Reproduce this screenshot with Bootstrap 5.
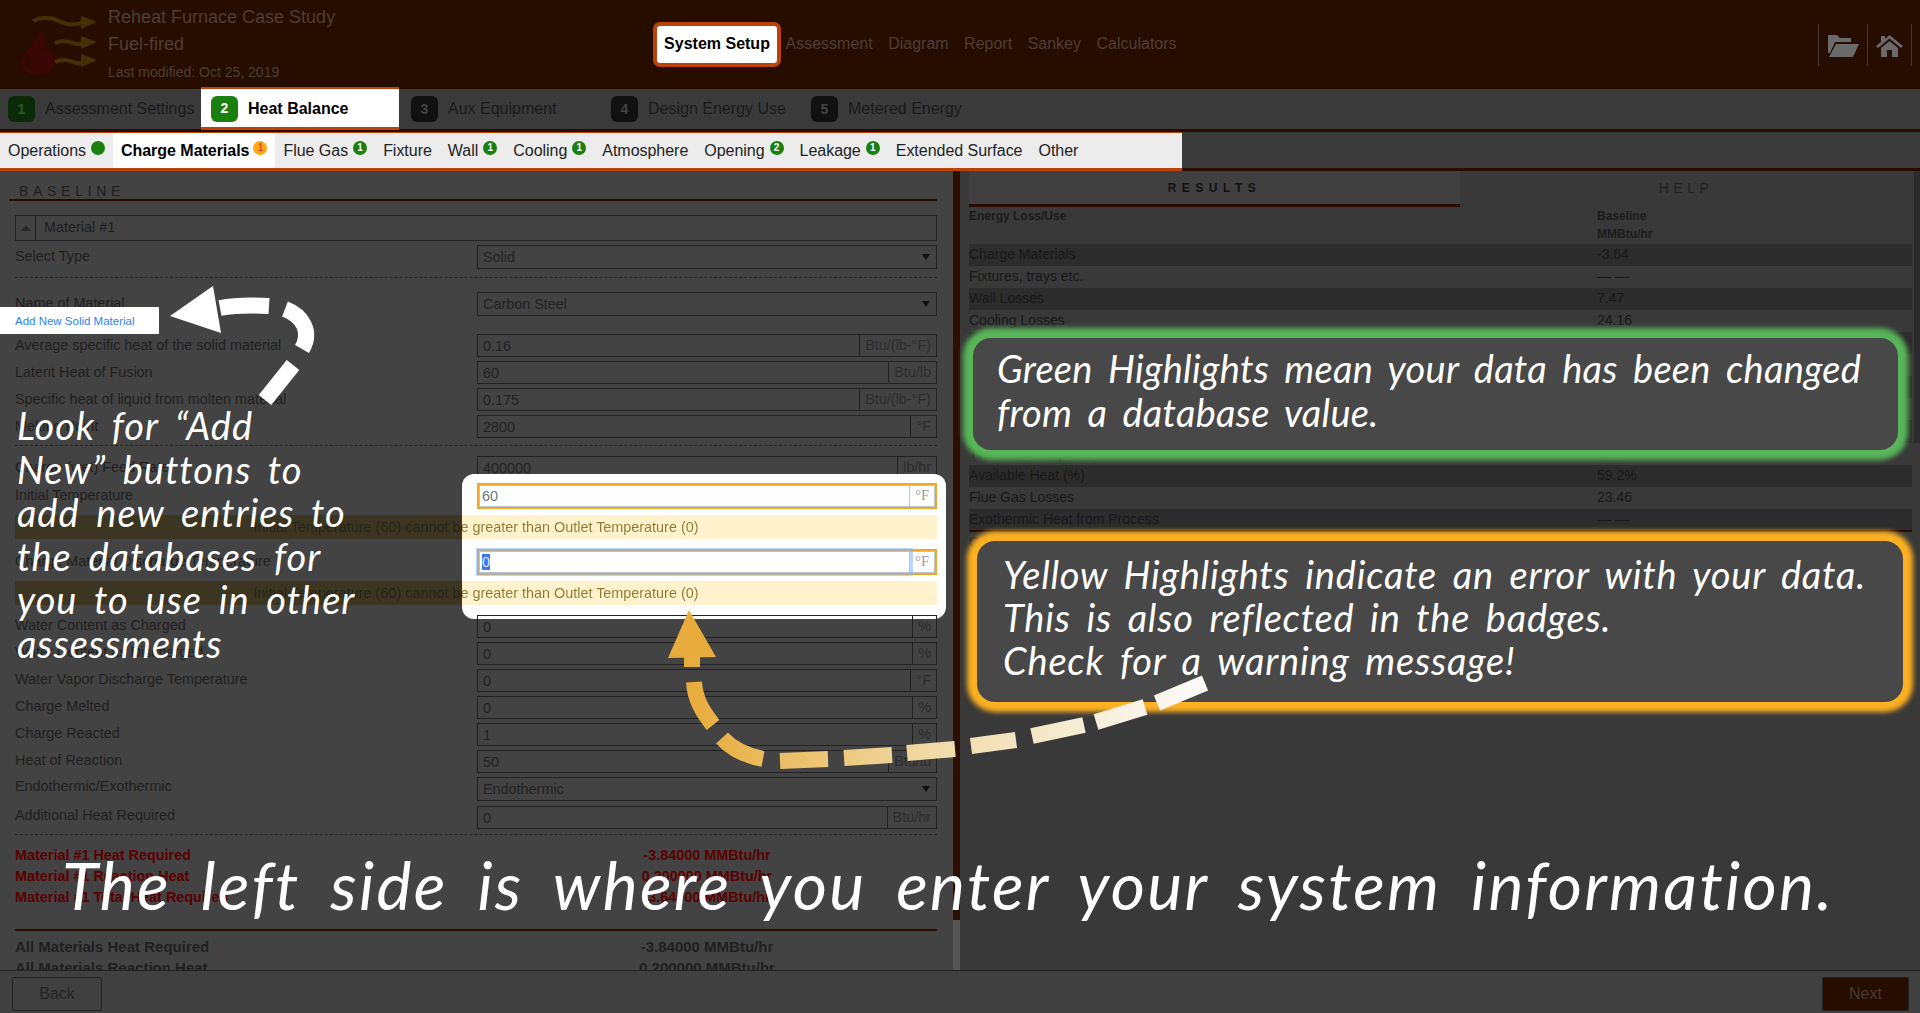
<!DOCTYPE html>
<html lang="en">
<head>
    <meta charset="UTF-8">
    <title>Reheat Furnace Case Study - System Setup</title>
    <link href="https://cdn.jsdelivr.net/npm/bootstrap@5.3.0/dist/css/bootstrap.min.css" rel="stylesheet">
    <style>
        html, body { height: 100%; margin: 0; overflow: hidden; }
        body { font-family: "Liberation Sans", Arial, sans-serif; font-size: 14.4px; color: #202020; background: #393939; }
        .shot { position: relative; width: 1920px; height: 1013px; overflow: hidden; display: flex; flex-direction: column; }

        .topbar { height: 89px; background: #270c00; color: #4e3e36; flex: none; }
        .logo-box { width: 108px; padding: 15px 0 0 19px; }
        .title-box { width: 545px; padding-top: 4px; }
        .title-box div { font-size: 18px; line-height: 27px; }
        .title-box .stamp { font-size: 14px; line-height: 28px; }
        .top-nav { gap: 15.5px; font-size: 16px; padding-bottom: 2px; }
        .setup-btn { background: #fff; border: 4px solid #bb4307; border-radius: 7px; color: #000; font-weight: bold; height: 45px; width: 128px; margin: 2px -11px 0 0; padding: 0 0 2px; }
        .tool-cell { width: 49px; height: 42px; border-left: 1px solid #4a3a33; }
        .tool-cell:last-child { width: 45px; border-right: 1px solid #4a3a33; }

        .step-bar { height: 43px; background: #3a3a3a; border-bottom: 3px solid #2a0d00; flex: none; font-size: 16px; color: #1a1a1a; }
        .step { height: 40px; padding-left: 12px; gap: 10px; width: 200px; }
        .step.first { width: 201px; padding-left: 8px; }
        .step.on { width: 198px; padding: 1px 0 0 10px; height: 43px; margin-top: -2px; background: #fff; color: #000; font-weight: bold; border-top: 2px solid #bb4307; border-bottom: 3px solid #bb4307; }
        .step-num { width: 27px; height: 26px; border-radius: 6px; background: #111; color: #444; font-size: 14px; font-weight: bold; display: flex; align-items: center; justify-content: center; }
        .step.first .step-num { background: #0a2a08; color: #2c5a28; }
        .step.on .step-num { background: #198010; color: #fff; }

        .sub-bar { height: 39px; flex: none; background: #3a3a3a; border-bottom: 3px solid #2a0d00; }
        .sub-strip { width: 1182px; height: 39px; background: #ececec; border-top: 1px solid #bb4307; border-bottom: 3px solid #bb4307; font-size: 16px; letter-spacing: -.03px; color: #222; }
        .sub-item { padding: 0 8px; height: 35px; }
        .sub-item.on { background: #fff; color: #000; font-weight: bold; }
        .sub-dot { width: 14px; height: 14px; border-radius: 50%; background: #198010; color: #fff; font-size: 10px; font-weight: bold; line-height: 14px; text-align: center; margin: -6px 0 0 5px; }
        .sub-dot.warn { background: #fba919; color: #c0280a; font-weight: normal; margin-left: 4px; }

        .main-row { flex: 1 1 auto; min-height: 0; }
        .left-pane { width: 953px; background: #434343; overflow: hidden; flex: none; }
        .gutter { width: 7px; flex: none; background: linear-gradient(#2d0e01 0 749px, #555 749px); }
        .right-pane { flex: 1; background: #393939; padding: 0 8px 0 9px; overflow: hidden; }

        .base-head { margin: 0 16px 14px 9px; height: 30px; padding: 11px 0 0 10px; border-bottom: 2px solid #2a0d00; font-size: 14px; line-height: 18px; letter-spacing: 4.7px; color: #1e1e1e; }
        .form-wrap { position: relative; width: 937px; padding-left: 15px; }
        .mat-head { height: 26px; margin-bottom: 4px; border: 1px solid #222; color: #1e1e1e; }
        .mat-toggle { width: 20px; height: 100%; border-right: 1px solid #222; }
        .mat-toggle i { display: block; border: 5px solid transparent; border-top: 0; border-bottom: 6px solid #2b2b2b; }
        .mat-name { padding-left: 8px; }
        .fld { display: flex; align-items: center; height: 23px; margin-bottom: 4px; }
        .fld.sel { height: 24px; }
        .fld-name { width: 462px; flex: none; }
        .lift .fld-name { margin-top: -2px; }
        .lift .fld.low .fld-name { margin-top: -4px; }
        .dash { border-top: 1px dashed #242424; }
        .fld .input-group { flex: 1; height: 100%; flex-wrap: nowrap; }
        .fld .form-control, .fld .form-select { height: 100%; min-height: 0; padding: 0 5px; font-size: 14.4px; line-height: 1; color: #222; background-color: transparent; border: 1px solid #222; border-radius: 0; box-shadow: none; }
        .fld .form-select { padding-right: 20px; background-image: url("data:image/svg+xml,%3csvg xmlns='http://www.w3.org/2000/svg' viewBox='0 0 8 6'%3e%3cpath fill='%23111' d='M0 0h8L4 6z'/%3e%3c/svg%3e"); background-position: right 6px center; background-size: 8px 6px; }
        .fld .input-group-text { padding: 0 5px; font-size: 14.4px; color: #2c2c2c; background: transparent; border: 1px solid #222; border-radius: 0; }

        .spot { position: relative; isolation: isolate; }
        .spot::before { content: ""; position: absolute; z-index: -1; left: 447px; right: -9px; top: -9px; bottom: -14px; background: #fff; border-radius: 12px; }
        .fld.hot { height: 26px; margin-bottom: 6px; }
        .hot .input-group { border: 2.5px solid #f5a623; }
        .fld.hot .form-control { padding-left: 2px; background: #fff; color: #6c757d; border-color: #b9c4d0; }
        .fld.hot .input-group-text { background: #fff; color: #999; border-color: #b9c4d0; font-family: "Liberation Serif", serif; }
        .fld.hot .form-control:focus { box-shadow: 0 0 0 3px rgba(130, 180, 250, .55); position: relative; z-index: 3; }
        .hot input::selection { background: #3b78f0; color: #dfe9ff; }
        .warn-strip { height: 24px; margin-bottom: 10px; line-height: 24px; text-align: center; background: linear-gradient(90deg, #3c3521 0 447px, #fff2cc 447px); }
        .warn-text { display: block; color: transparent; background: linear-gradient(90deg, #262318 0 447px, #8f7a35 447px); -webkit-background-clip: text; background-clip: text; }
        .sum-row { height: 21px; line-height: 21px; font-weight: bold; font-size: 15px; }
        .sum-row.red { color: #5c0000; font-size: 14.4px; }
        .sum-val { width: 460px; text-align: center; }
        .sum-line { margin: 21px 0 5px; border-top: 2px solid #2a0d00; }

        .pane-tabs { height: 36px; }
        .pane-tab { flex: none; text-align: center; padding-top: 1px; line-height: 32px; letter-spacing: 5.5px; }
        .pane-tab.on { width: 491px; background: #404040; border-bottom: 3px solid #2a0d00; font-size: 12px; font-weight: bold; color: #111; }
        .pane-tab.off { width: 452px; font-size: 14px; letter-spacing: 4.5px; color: #222; }
        .res-head { font-size: 12px; font-weight: bold; line-height: 18px; color: #1c1c1c; height: 37px; }
        .res-col { width: 628px; flex: none; }
        .res-table { --bs-table-bg: transparent; --bs-table-color: #181818; --bs-table-striped-bg: #2c2c2c; --bs-table-striped-color: #181818; margin: 0; width: 943px; font-size: 14px; }
        .res-table td { height: 22px; padding: 0; border: 0; line-height: 20px; vertical-align: top; }
        .res-table td:first-child { width: 628px; }
        .res-table tr.gap td { height: 23px; }
        .res-table tr.total td { border-bottom: 2px solid #2a0d00; }
        .side-thumb { position: absolute; right: 0; top: 171px; width: 6px; height: 272px; background: #2b2b2b; }

        .foot-bar { height: 43px; flex: none; background: #404040; border-top: 1px solid #222; padding: 6px 11px 0 12px; }
        .foot-btn { width: 90px; height: 34px; padding: 0; font-size: 16px; border: 1px solid #222; border-radius: 2px; color: #242424; background: transparent; }
        .foot-btn.next { width: 87px; background: #270c00; color: #4b3a30; }

        .add-new { position: absolute; left: 0; top: 92px; width: 159px; height: 27px; padding: 1px 0 0 15px; background: #fff; color: #2d7ff9; font-size: 11.5px; line-height: 27px; z-index: 4; }
        .arrows { position: absolute; left: 0; top: 0; z-index: 5; pointer-events: none; }
        .note { position: absolute; z-index: 6; color: #fff; font-family: Lato, "Noto Sans", sans-serif; font-style: italic; white-space: nowrap; }
        .note-left { left: 17px; top: 404px; font-size: 38px; line-height: 43.5px; letter-spacing: .95px; word-spacing: 7px; }
        .note-wide { left: 62px; top: 845px; font-size: 66px; line-height: 80px; letter-spacing: 2.3px; word-spacing: 12px; }
        .callout { position: absolute; z-index: 4; background: #484848; border-radius: 18px; color: #fff; font-family: Lato, "Noto Sans", sans-serif; font-style: italic; font-size: 38px; white-space: nowrap; }
        .callout-green { left: 973px; top: 338px; width: 925px; height: 112px; padding: 8px 0 0 24px; line-height: 44px; letter-spacing: .3px; word-spacing: 6px; box-shadow: 0 0 5px 10px #58b558; }
        .callout-yellow { left: 977px; top: 541px; width: 926px; height: 161px; padding: 12px 0 0 26px; line-height: 43px; letter-spacing: .8px; word-spacing: 6px; box-shadow: 0 0 5px 10px #fdb022; }
    </style>
</head>
<body>
<div class="shot">
    <div class="topbar d-flex">
        <div class="logo-box">
            <svg width="82" height="60" viewBox="0 0 82 60">
                <path d="M20 12c2 8-3 12-8 18-5 7-10 12-10 19 0 7 8 11 16 11s17-4 18-12c1-7-5-11-5-17-2 3-3 5-5 5 1-9-1-17-6-24z" fill="#3a0606"/>
                <path d="M10 38c-3 5-4 9-2 13 2 3 4 4 6 5-3-5-3-12-4-18z" fill="#270c00"/>
                <path d="M14 6c10-5 18-4 26 0s16 5 25 1" fill="none" stroke="#453005" stroke-width="4"/>
                <path d="M62 1l16 6-16 7z" fill="#453005"/>
                <path d="M36 28c8-3 12-2 18 0s10 2 12-1" fill="none" stroke="#453005" stroke-width="4"/>
                <path d="M62 21l16 6-16 7z" fill="#453005"/>
                <path d="M36 47c8-3 12-2 18 0s10 2 12-1" fill="none" stroke="#453005" stroke-width="4"/>
                <path d="M62 39l16 6-16 7z" fill="#453005"/>
            </svg>
        </div>
        <div class="title-box">
            <div>Reheat Furnace Case Study</div>
            <div>Fuel-fired</div>
            <div class="stamp">Last modified: Oct 25, 2019</div>
        </div>
        <div class="top-nav d-flex align-items-center">
            <button class="setup-btn" type="button">System Setup</button>
            <span>Assessment</span>
            <span>Diagram</span>
            <span>Report</span>
            <span>Sankey</span>
            <span>Calculators</span>
        </div>
        <div class="ms-auto d-flex align-items-center pe-2">
            <div class="tool-cell d-flex align-items-center justify-content-center">
                <svg width="31" height="24" viewBox="0 0 31 24"><path d="M0 2h9l3 3h11v4H7L2 20H0zM8 11h23l-6 13H1z" fill="#6a6a6a"/></svg>
            </div>
            <div class="tool-cell d-flex align-items-center justify-content-center">
                <svg width="27" height="24" viewBox="0 0 27 24"><path d="M13.5 2L27 13l-2 2-11.500-9.500L2 15l-2-2 5-4V3h4v3zM5 15l8.500-7 8.500 7v9h-6v-7h-5v7H5z" fill="#6a6a6a"/></svg>
            </div>
        </div>
    </div>

    <div class="step-bar d-flex">
        <div class="step first d-flex align-items-center"><span class="step-num">1</span>Assessment Settings</div>
        <div class="step on d-flex align-items-center"><span class="step-num">2</span>Heat Balance</div>
        <div class="step d-flex align-items-center"><span class="step-num">3</span>Aux Equipment</div>
        <div class="step d-flex align-items-center"><span class="step-num">4</span>Design Energy Use</div>
        <div class="step d-flex align-items-center"><span class="step-num">5</span>Metered Energy</div>
    </div>

    <div class="sub-bar">
        <div class="sub-strip d-flex">
            <div class="sub-item d-flex align-items-center">Operations<span class="sub-dot"></span></div>
            <div class="sub-item on d-flex align-items-center">Charge Materials<span class="sub-dot warn">1</span></div>
            <div class="sub-item d-flex align-items-center">Flue Gas<span class="sub-dot">1</span></div>
            <div class="sub-item d-flex align-items-center">Fixture</div>
            <div class="sub-item d-flex align-items-center">Wall<span class="sub-dot">1</span></div>
            <div class="sub-item d-flex align-items-center">Cooling<span class="sub-dot">1</span></div>
            <div class="sub-item d-flex align-items-center">Atmosphere</div>
            <div class="sub-item d-flex align-items-center">Opening<span class="sub-dot">2</span></div>
            <div class="sub-item d-flex align-items-center">Leakage<span class="sub-dot">1</span></div>
            <div class="sub-item d-flex align-items-center">Extended Surface</div>
            <div class="sub-item d-flex align-items-center">Other</div>
        </div>
    </div>

    <div class="main-row d-flex">
        <div class="left-pane">
            <div class="base-head">BASELINE</div>
            <div class="form-wrap">
                <div class="mat-head d-flex align-items-center">
                    <div class="mat-toggle d-flex align-items-center justify-content-center"><i></i></div>
                    <div class="mat-name">Material #1</div>
                </div>
                <div class="fld sel" style="margin-bottom:8px">
                    <div class="fld-name">Select Type</div>
                    <select class="form-select"><option>Solid</option></select>
                </div>
                <div class="dash" style="margin-bottom:14px"></div>
                <div class="fld sel" style="margin-bottom:18px">
                    <div class="fld-name">Name of Material</div>
                    <select class="form-select"><option>Carbon Steel</option></select>
                </div>
                <div class="fld"><div class="fld-name">Average specific heat of the solid material</div><div class="input-group"><input class="form-control" value="0.16"><span class="input-group-text">Btu/(lb-°F)</span></div></div>
                <div class="fld"><div class="fld-name">Latent Heat of Fusion</div><div class="input-group"><input class="form-control" value="60"><span class="input-group-text">Btu/lb</span></div></div>
                <div class="fld"><div class="fld-name">Specific heat of liquid from molten material</div><div class="input-group"><input class="form-control" value="0.175"><span class="input-group-text">Btu/(lb-°F)</span></div></div>
                <div class="fld" style="margin-bottom:7px"><div class="fld-name">Melting Point</div><div class="input-group"><input class="form-control" value="2800"><span class="input-group-text">°F</span></div></div>
                <div class="dash" style="margin-bottom:10px"></div>
                <div class="fld"><div class="fld-name">Charge (wet) Feed Rate</div><div class="input-group"><input class="form-control" value="400000"><span class="input-group-text">lb/hr</span></div></div>

                <div class="spot">
                    <div class="fld hot"><div class="fld-name">Initial Temperature</div><div class="input-group"><input class="form-control" value="60"><span class="input-group-text">°F</span></div></div>
                    <div class="warn-strip"><span class="warn-text">Initial Temperature (60) cannot be greater than Outlet Temperature (0)</span></div>
                    <div class="fld hot"><div class="fld-name">Charge Material Discharge Temperature</div><div class="input-group"><input class="form-control" id="outlet" value="0"><span class="input-group-text">°F</span></div></div>
                    <div class="warn-strip"><span class="warn-text">Initial Temperature (60) cannot be greater than Outlet Temperature (0)</span></div>
                </div>

                <div class="lift">
                    <div class="fld"><div class="fld-name">Water Content as Charged</div><div class="input-group"><input class="form-control" value="0"><span class="input-group-text">%</span></div></div>
                    <div class="fld"><div class="fld-name">Water Content as Discharged</div><div class="input-group"><input class="form-control" value="0"><span class="input-group-text">%</span></div></div>
                    <div class="fld"><div class="fld-name">Water Vapor Discharge Temperature</div><div class="input-group"><input class="form-control" value="0"><span class="input-group-text">°F</span></div></div>
                    <div class="fld"><div class="fld-name">Charge Melted</div><div class="input-group"><input class="form-control" value="0"><span class="input-group-text">%</span></div></div>
                    <div class="fld"><div class="fld-name">Charge Reacted</div><div class="input-group"><input class="form-control" value="1"><span class="input-group-text">%</span></div></div>
                    <div class="fld"><div class="fld-name">Heat of Reaction</div><div class="input-group"><input class="form-control" value="50"><span class="input-group-text">Btu/lb</span></div></div>
                    <div class="fld sel low" style="margin-bottom:5px">
                        <div class="fld-name">Endothermic/Exothermic</div>
                        <select class="form-select"><option>Endothermic</option></select>
                    </div>
                    <div class="fld low" style="margin-bottom:5px"><div class="fld-name">Additional Heat Required</div><div class="input-group"><input class="form-control" value="0"><span class="input-group-text">Btu/hr</span></div></div>
                </div>
                <div class="dash" style="margin-bottom:10px"></div>
                <div class="sum-row red d-flex"><div class="fld-name">Material #1 Heat Required</div><div class="sum-val">-3.84000 MMBtu/hr</div></div>
                <div class="sum-row red d-flex"><div class="fld-name">Material #1 Reaction Heat</div><div class="sum-val">0.200000 MMBtu/hr</div></div>
                <div class="sum-row red d-flex"><div class="fld-name">Material #1 Total Heat Required</div><div class="sum-val">-3.64000 MMBtu/hr</div></div>
                <div class="sum-line"></div>
                <div class="sum-row d-flex"><div class="fld-name">All Materials Heat Required</div><div class="sum-val">-3.84000 MMBtu/hr</div></div>
                <div class="sum-row d-flex"><div class="fld-name">All Materials Reaction Heat</div><div class="sum-val">0.200000 MMBtu/hr</div></div>

                <a class="add-new text-decoration-none" href="#">Add New Solid Material</a>
            </div>
        </div>
        <div class="gutter"></div>
        <div class="right-pane">
            <div class="pane-tabs d-flex">
                <div class="pane-tab on">RESULTS</div>
                <div class="pane-tab off">HELP</div>
            </div>
            <div class="res-head d-flex">
                <div class="res-col">Energy Loss/Use</div>
                <div>Baseline<br>MMBtu/hr</div>
            </div>
            <table class="table table-striped res-table">
                <tbody>
                    <tr><td>Charge Materials</td><td>-3.64</td></tr>
                    <tr><td>Fixtures, trays etc.</td><td>— —</td></tr>
                    <tr><td>Wall Losses</td><td>7.47</td></tr>
                    <tr><td>Cooling Losses</td><td>24.16</td></tr>
                    <tr><td></td><td></td></tr>
                    <tr><td></td><td></td></tr>
                    <tr><td></td><td></td></tr>
                    <tr><td></td><td></td></tr>
                    <tr class="gap"><td></td><td></td></tr>
                    <tr><td>Total Heat Required</td><td>59.57</td></tr>
                    <tr><td>Available Heat (%)</td><td>59.2%</td></tr>
                    <tr><td>Flue Gas Losses</td><td>23.46</td></tr>
                    <tr class="total"><td>Exothermic Heat from Process</td><td>— —</td></tr>
                    <tr><td>Gross Heat Input</td><td></td></tr>
                </tbody>
            </table>
        </div>
    </div>

    <div class="foot-bar d-flex justify-content-between">
        <button class="foot-btn" type="button">Back</button>
        <button class="foot-btn next" type="button">Next</button>
    </div>

    <div class="side-thumb"></div>

    <svg class="arrows" width="1920" height="1013" viewBox="0 0 1920 1013">
        <defs>
            <linearGradient id="trail" gradientUnits="userSpaceOnUse" x1="690" y1="0" x2="1190" y2="0">
                <stop offset="0" stop-color="#e8ac3c"/>
                <stop offset=".5" stop-color="#f0dcaa"/>
                <stop offset="1" stop-color="#fbfaf6"/>
            </linearGradient>
        </defs>
        <!-- white arrow to the add new button -->
        <path d="M170 316L213 286L221 333Z" fill="#fff"/>
        <g fill="none" stroke="#fff" stroke-width="16">
            <path d="M220 308C236 305 252 305 269 306"/>
            <path d="M285 309C303 316 312 332 302 349"/>
            <path d="M293 365L265 400"/>
        </g>
        <!-- orange arrow to the warning -->
        <path d="M689 610L668 658L716 657Z" fill="#e8ac3c"/>
        <g fill="none" stroke="url(#trail)" stroke-width="16">
            <path d="M692 655L692 667"/>
            <path d="M694 682C695 700 703 712 713 725"/>
            <path d="M722 738C733 750 747 756 763 759"/>
            <path d="M780 761L828 759"/>
            <path d="M844 758L892 755"/>
            <path d="M907 753L955 749"/>
            <path d="M971 746L1016 740"/>
            <path d="M1032 736L1084 725"/>
            <path d="M1096 722L1145 707"/>
            <path d="M1157 703L1205 683"/>
        </g>
    </svg>

    <div class="note note-left">Look for “Add<br>New” buttons to<br>add new entries to<br>the databases for<br>you to use in other<br>assessments</div>
    <div class="callout callout-green">Green Highlights mean your data has been changed<br>from a database value.</div>
    <div class="callout callout-yellow">Yellow Highlights indicate an error with your data.<br>This is also reflected in the badges.<br>Check for a warning message!</div>
    <div class="note note-wide">The left side is where you enter your system information.</div>
</div>
<script src="https://cdn.jsdelivr.net/npm/bootstrap@5.3.0/dist/js/bootstrap.bundle.min.js"></script>
<script>
    // the second temperature is focused in the picture
    document.getElementById('outlet').select();
</script>
</body>
</html>
